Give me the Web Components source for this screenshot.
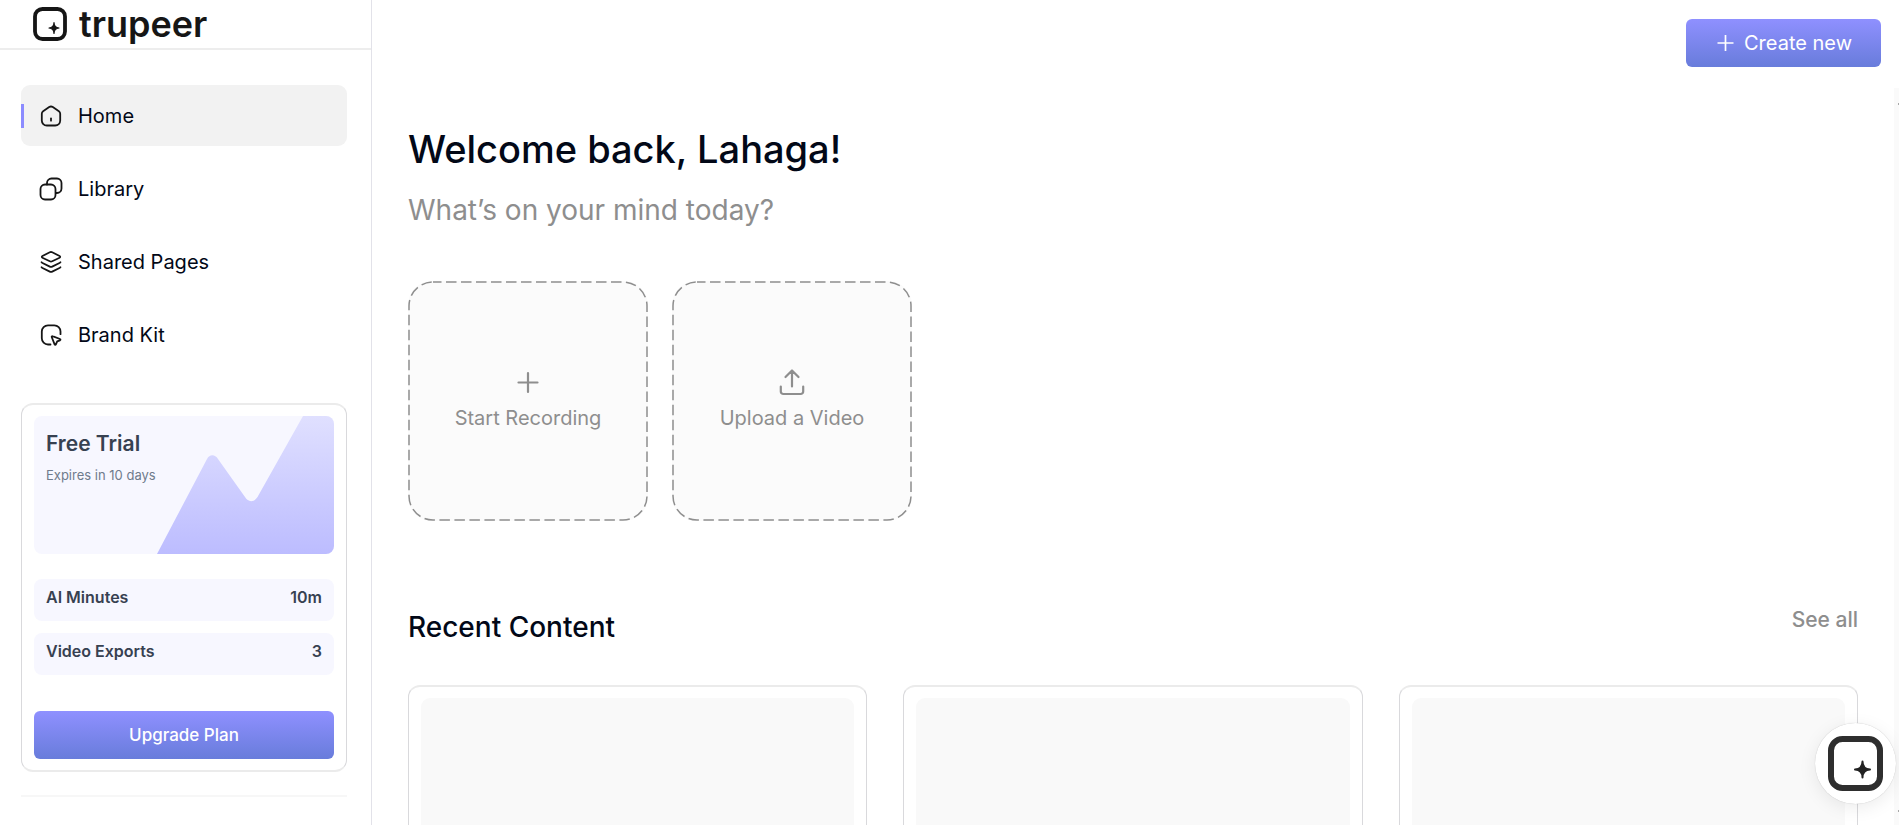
<!DOCTYPE html>
<html lang="en">
<head>
<meta charset="utf-8">
<meta name="viewport" content="width=device-width, initial-scale=1">
<title>Trupeer – Home</title>
<style>
  html, body { margin: 0; height: 100%; overflow: hidden; }
  body {
    font-family: Inter, "Liberation Sans", sans-serif;
    color: #020817;
    background: #fff;
    --muted: #8e8e8e;
    --accent: #8c8cff;
    --line-soft: #ebebeb;
    --line: #d9d9dc;
    --accent-fill: linear-gradient(#8f90ff, #687cdb);
  }
</style>
</head>
<body>
<app-shell>
  <brand-logo slot="brand"></brand-logo>
  <side-link slot="nav" icon="home" active>Home</side-link>
  <side-link slot="nav" icon="library">Library</side-link>
  <side-link slot="nav" icon="pages">Shared Pages</side-link>
  <side-link slot="nav" icon="brand">Brand Kit</side-link>
  <trial-card slot="plan">
    <span slot="title">Free Trial</span>
    <span slot="expiry">Expires in 10 days</span>
    <usage-row value="10m">AI Minutes</usage-row>
    <usage-row value="3">Video Exports</usage-row>
  </trial-card>
  <create-button slot="action">Create new</create-button>
  <welcome-header>
    Welcome back, Lahaga!
    <span slot="sub">What’s on your mind today?</span>
  </welcome-header>
  <tile-row>
    <action-tile icon="plus">Start Recording</action-tile>
    <action-tile icon="upload">Upload a Video</action-tile>
  </tile-row>
  <recent-content>
    <content-card></content-card>
    <content-card></content-card>
    <content-card></content-card>
  </recent-content>
</app-shell>
<help-bubble></help-bubble>

<script>
const ICONS = {
  home: '<path d="M2.800 9.800v6.700a5 5 0 0 0 5 5h8.400a5 5 0 0 0 5-5V9.800a3 3 0 0 0-1.300-2.500l-6.100-4.200a3.200 3.200 0 0 0-3.600 0L4.100 7.300a3 3 0 0 0-1.300 2.500z"/><path d="M12 14.300v2.400"/>',
  library: '<rect x="1.500" y="7.500" width="15" height="15" rx="4.500"/><path d="M8 7.500V6a4.500 4.500 0 0 1 4.500-4.500H18A4.500 4.500 0 0 1 22.500 6v5.500A4.500 4.500 0 0 1 18 16h-1"/>',
  pages: '<path d="M10.800 2.300 3.400 6c-.8.400-.8 1.300 0 1.700l7.400 3.600c.8.400 1.600.4 2.400 0l7.400-3.600c.8-.4.8-1.300 0-1.700l-7.400-3.700c-.8-.4-1.600-.4-2.400 0z"/><path d="M2.500 12.200c.2.400.5.600 1 .8l7.300 3.600c.8.400 1.600.4 2.400 0l7.300-3.600c.5-.2.8-.4 1-.8"/><path d="M2.500 17.200c.2.400.5.600 1 .8l7.300 3.600c.8.400 1.600.4 2.400 0l7.300-3.600c.5-.2.8-.4 1-.8"/>',
  brand: '<path d="M11.500 21.500H9a6.200 6.200 0 0 1-6.200-6.200V8.500A6.200 6.200 0 0 1 9 2.300h6.300a6.200 6.200 0 0 1 6.200 6.200v2.700"/><path d="M13.500 13.200 21 16c.6.200.6 1 0 1.300l-2.800 1.100-1.300 3c-.3.600-1 .6-1.300 0l-2.900-7.400c-.2-.5.300-1 .8-.8z"/>'
};
const TILE_ICONS = {
  plus: '<path d="M14 5v19M4.500 14.500h19"/>',
  upload: '<path d="M14 18.500V2.500M7.500 9 14 2.500 20.500 9M2.800 18.500v5a2.500 2.500 0 0 0 2.500 2.500h17.400a2.500 2.500 0 0 0 2.500-2.500v-5"/>'
};

function define(name, render) {
  customElements.define(name, class extends HTMLElement {
    constructor() {
      super();
      this.attachShadow({ mode: 'open' });
    }
    connectedCallback() {
      const t = document.createElement('template');
      t.innerHTML = '<style>*{box-sizing:border-box}svg{display:block;flex:none}</style>' + render(this);
      this.shadowRoot.replaceChildren(t.content.cloneNode(true));
    }
  });
}

define('app-shell', () => `
  <style>
    :host { display: grid; grid-template-columns: 372px minmax(0, 1fr); height: 100vh; }
    aside { border-right: 1px solid #e2e2e9; overflow: hidden; }
    .brand { height: 50px; padding-left: 33px; border-bottom: 2px solid #ededed; display: flex; align-items: center; }
    nav { display: flex; flex-direction: column; gap: 12px; padding: 35px 24px 38px 21px; }
    .plan { padding: 0 24px 0 21px; }
    .plan hr { margin: 23px 0 0; border: 0; height: 2px; background: #f7f7f7; }
    .page { display: flex; flex-direction: column; min-height: 0; }
    header { flex: none; height: 88px; padding: 19px 18px 0; display: flex; justify-content: flex-end; align-items: flex-start; }
    .scroll { flex: 1; min-height: 0; display: grid; grid-template-columns: minmax(0, 1fr) 5px; }
    main { overflow: hidden; padding: 36px 36px 0; }
    .track { background: #fafafa; display: flex; flex-direction: column; justify-content: space-between; align-items: flex-end; padding: 15px 0 13px; }
    .track i { width: 1px; height: 2px; background: #a8a8a8; }
  </style>
  <aside>
    <div class="brand"><slot name="brand"></slot></div>
    <nav aria-label="Main"><slot name="nav"></slot></nav>
    <div class="plan"><slot name="plan"></slot><hr></div>
  </aside>
  <div class="page">
    <header><slot name="action"></slot></header>
    <div class="scroll">
      <main><slot></slot></main>
      <div class="track" aria-hidden="true"><i></i><i></i></div>
    </div>
  </div>`);

define('brand-logo', () => `
  <style>
    :host { display: block; }
    a { display: flex; align-items: center; gap: 12px; color: #161616; text-decoration: none; font-size: 36px; line-height: 48px; font-weight: 600; }
  </style>
  <a href="#home">
    <svg width="34" height="34" viewBox="0 0 34 34" aria-hidden="true"><rect x="2" y="2" width="30" height="30" rx="7.500" fill="none" stroke="#161616" stroke-width="3.800"/><path d="M21 15.500Q21 20.500 26 21 21 21.500 21 26.500 21 21.500 16 21 21 20.500 21 15.500z" fill="#161616" stroke="#161616" stroke-width="1.200" stroke-linejoin="round"/></svg>
    <span>trupeer</span>
  </a>`);

define('side-link', el => `
  <style>
    :host { display: block; }
    a { display: flex; align-items: center; height: 61px; border-radius: 9px; color: #020817; text-decoration: none; font-size: 20px; line-height: 28px; }
    a::before { content: ""; width: 3px; height: 24px; margin-right: 15px; }
    :host([active]) a { background: #f2f2f2; }
    :host([active]) a::before { background: var(--accent); }
    svg { margin-right: 15px; }
  </style>
  <a href="#" ${el.hasAttribute('active') ? 'aria-current="page"' : ''}>
    <svg width="24" height="24" viewBox="0 0 24 24" fill="none" stroke="#161616" stroke-width="1.800" stroke-linecap="round" stroke-linejoin="round" aria-hidden="true">${ICONS[el.getAttribute('icon')]}</svg>
    <slot></slot>
  </a>`);

define('trial-card', () => `
  <style>
    :host { display: block; padding: 11px 12px; border: solid; border-width: 2px 1px; border-color: var(--line-soft) var(--line); border-radius: 12px; }
    .panel { display: grid; height: 138px; background: #f7f7ff; border-radius: 8px; overflow: hidden; }
    .panel > * { grid-area: 1 / 1; }
    .panel svg { justify-self: end; }
    .copy { padding: 13px 12px; color: #374151; }
    h2 { margin: 0 0 6px; font-size: 21px; line-height: 30px; font-weight: 600; }
    p { margin: 0; font-size: 13px; line-height: 20px; color: #6f7b8c; }
    .usage { display: flex; flex-direction: column; gap: 12px; margin: 25px 0 36px; }
    button { width: 100%; height: 48px; border: 0; border-radius: 6px; background: var(--accent-fill); color: #fff; font: 500 17px/24px Inter, "Liberation Sans", sans-serif; }
  </style>
  <div class="panel">
    <svg width="177" height="138" viewBox="123 0 177 138" aria-hidden="true">
      <defs><linearGradient id="g" x2="0" y2="1"><stop stop-color="#e0e0ff"/><stop offset="1" stop-color="#bcbcff"/></linearGradient></defs>
      <path fill="url(#g)" d="M123 138 173 43C175.500 38 181 38 184 43L211 81C214 86.500 220 86.500 223.500 81L269 0H300V138Z"/>
    </svg>
    <div class="copy"><h2><slot name="title"></slot></h2><p><slot name="expiry"></slot></p></div>
  </div>
  <div class="usage"><slot></slot></div>
  <button type="button">Upgrade Plan</button>`);

define('usage-row', el => `
  <style>
    :host { display: flex; justify-content: space-between; padding: 7px 12px 13px; background: #f7f7ff; border-radius: 8px; color: #374151; font-size: 16px; line-height: 22px; font-weight: 600; }
  </style>
  <span><slot></slot></span><span>${el.getAttribute('value')}</span>`);

define('create-button', () => `
  <style>
    :host { display: block; }
    button { display: flex; align-items: center; gap: 9px; height: 48px; padding: 0 29px; border: 0; border-radius: 6px; background: var(--accent-fill); color: #fff; font: 400 20px/28px Inter, "Liberation Sans", sans-serif; }
  </style>
  <button type="button">
    <svg width="20" height="20" viewBox="0 0 20 20" stroke="#fff" stroke-width="1.700" aria-hidden="true"><path d="M10.500 2v16M2.500 10h16"/></svg>
    <slot></slot>
  </button>`);

define('welcome-header', () => `
  <style>
    :host { display: block; }
    h1 { margin: 0 0 18px; font-size: 38px; line-height: 50px; font-weight: 500; }
    p { margin: 0; font-size: 28px; line-height: 36px; color: var(--muted); }
  </style>
  <h1><slot></slot></h1>
  <p><slot name="sub"></slot></p>`);

define('tile-row', () => `
  <style>:host { display: flex; flex-wrap: wrap; gap: 24px; margin-top: 53px; }</style>
  <slot></slot>`);

define('action-tile', el => `
  <style>
    :host { display: block; position: relative; width: 240px; height: 240px; }
    button { width: 100%; height: 100%; padding: 0 0 4px; border: 0; border-radius: 24px; background: #fbfbfb; display: flex; flex-direction: column; align-items: center; justify-content: center; gap: 10px; color: var(--muted); font: 400 20px/24px Inter, "Liberation Sans", sans-serif; }
    .dash { position: absolute; inset: 0; width: 100%; height: 100%; pointer-events: none; }
    .dash rect { width: calc(100% - 2px); height: calc(100% - 2px); }
  </style>
  <button type="button">
    <svg width="28" height="28" viewBox="0 0 28 28" fill="none" stroke="#8e8e8e" stroke-width="2.200" stroke-linecap="round" stroke-linejoin="round" aria-hidden="true">${TILE_ICONS[el.getAttribute('icon')]}</svg>
    <slot></slot>
  </button>
  <svg class="dash" aria-hidden="true"><rect x="1" y="1" rx="24" fill="none" stroke="#8e8e8e" stroke-width="1.500" stroke-dasharray="10.500 4.500" stroke-dashoffset="2"/></svg>`);

define('recent-content', () => `
  <style>
    :host { display: block; margin-top: 88px; }
    .head { display: flex; justify-content: space-between; align-items: flex-start; margin-bottom: 40px; }
    h2 { margin: 0; font-size: 28px; line-height: 36px; font-weight: 500; }
    a { color: var(--muted); text-decoration: none; font-size: 21px; line-height: 22px; font-weight: 500; }
    .grid { display: grid; grid-template-columns: repeat(3, minmax(0, 1fr)); gap: 36px; }
  </style>
  <div class="head"><h2>Recent Content</h2><a href="#library">See all</a></div>
  <div class="grid"><slot></slot></div>`);

define('content-card', () => `
  <style>
    :host { display: block; padding: 11px 12px; border: solid; border-width: 2px 1px; border-color: var(--line-soft) var(--line); border-radius: 12px; }
    div { aspect-ratio: 16 / 9; background: #f9f9f9; border-radius: 9px; }
  </style>
  <div></div>`);

define('help-bubble', () => `
  <style>
    :host { position: fixed; right: 3px; bottom: 21px; }
    button { display: grid; place-items: center; width: 81px; height: 81px; padding: 0; border: 0; border-radius: 50%; background: #fff; box-shadow: 0 0 1px #0004, 0 4px 18px #00000014; }
  </style>
  <button type="button" aria-label="Open assistant">
    <svg width="55" height="55" viewBox="0 0 55 55" aria-hidden="true"><rect x="3" y="3" width="49" height="49" rx="11.500" fill="none" stroke="#2e2e2e" stroke-width="6"/><path d="M34.500 25.500Q34.500 33 42 33.500 34.500 34 34.500 41.500 34.500 34 27 33.500 34.500 33 34.500 25.500z" fill="#222" stroke="#222" stroke-width="2" stroke-linejoin="round"/></svg>
  </button>`);
</script>
</body>
</html>
